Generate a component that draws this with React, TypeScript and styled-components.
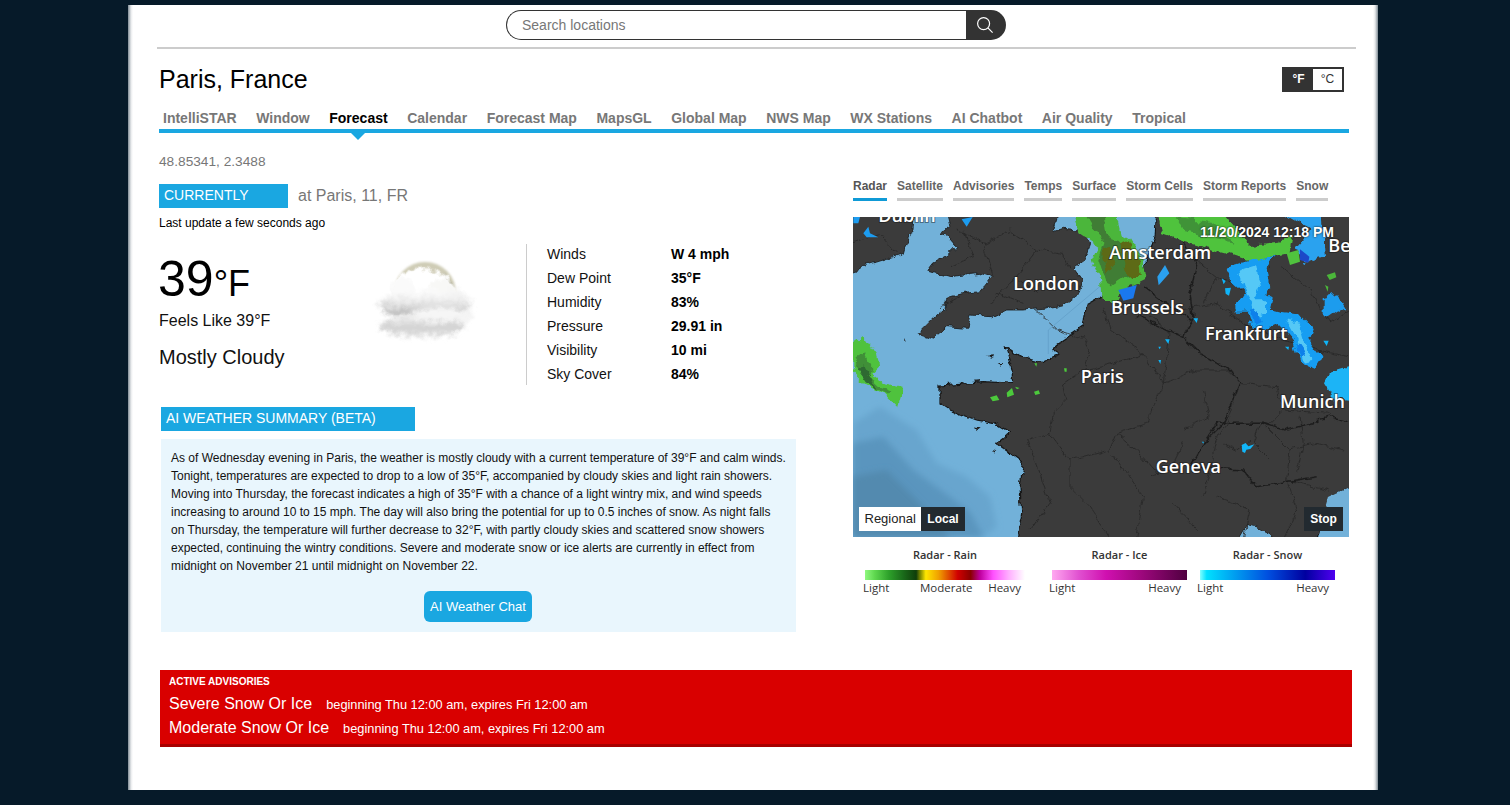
import React from 'react';
import styled, { createGlobalStyle } from 'styled-components';

const GlobalStyle = createGlobalStyle`
  html, body {
    margin: 0;
    padding: 0;
    height: 805px;
    overflow: hidden;
    background: #061a29;
    font-family: "Liberation Sans", Arial, sans-serif;
  }
  * { box-sizing: border-box; }
`;

const NAV_ITEMS = ['IntelliSTAR', 'Window', 'Forecast', 'Calendar', 'Forecast Map', 'MapsGL', 'Global Map', 'NWS Map', 'WX Stations', 'AI Chatbot', 'Air Quality', 'Tropical'];
const MAP_TABS = ['Radar', 'Satellite', 'Advisories', 'Temps', 'Surface', 'Storm Cells', 'Storm Reports', 'Snow'];
const CONDITIONS = [
  ['Winds', 'W 4 mph'],
  ['Dew Point', '35°F'],
  ['Humidity', '83%'],
  ['Pressure', '29.91 in'],
  ['Visibility', '10 mi'],
  ['Sky Cover', '84%'],
];

function SearchIcon() {
  return (
    <svg width="16" height="16" viewBox="0 0 16 16" fill="none" stroke="currentColor" strokeWidth="1.2">
      <circle cx="6.6" cy="6.6" r="6" />
      <path d="M10.9 10.9 L15.6 15.6" />
    </svg>
  );
}

function Cloud() {
  return (
    <svg width="110" height="90" viewBox="0 0 110 90">
      <defs>
        <filter id="soft" x="-20%" y="-30%" width="140%" height="160%"><feGaussianBlur stdDeviation="2" /></filter>
        <filter id="softer" x="-20%" y="-20%" width="140%" height="140%"><feGaussianBlur stdDeviation="0.8" /></filter>
        <filter id="fluff" x="-10%" y="-10%" width="120%" height="120%">
          <feTurbulence type="fractalNoise" baseFrequency="0.14" numOctaves="2" seed="3" />
          <feDisplacementMap in="SourceGraphic" scale="9" xChannelSelector="R" yChannelSelector="G" />
        </filter>
        <linearGradient id="band" x1="0" y1="0" x2="0" y2="1">
          <stop offset="0" stopColor="#ffffff" />
          <stop offset="0.45" stopColor="#e6e6e6" />
          <stop offset="0.8" stopColor="#b8b8b8" />
          <stop offset="1" stopColor="#dcdcdc" />
        </linearGradient>
        <linearGradient id="low" x1="0" y1="0" x2="0" y2="1">
          <stop offset="0" stopColor="#f7f7f7" />
          <stop offset="0.6" stopColor="#cfcfcf" />
          <stop offset="1" stopColor="#f2f2f2" />
        </linearGradient>
      </defs>
      <circle cx="53" cy="36" r="31" fill="#cfccb6" filter="url(#softer)" />
      <path d="M72 16 L82 30 L72 34 Z" fill="#a9a794" filter="url(#softer)" />
      <g filter="url(#fluff)">
        <ellipse cx="50" cy="30" rx="30" ry="18" fill="#ffffff" filter="url(#softer)" />
        <ellipse cx="30" cy="34" rx="12" ry="14" fill="#fafafa" filter="url(#softer)" />
        <ellipse cx="70" cy="34" rx="15" ry="12" fill="#f8f8f6" filter="url(#softer)" />
        <ellipse cx="82" cy="52" rx="19" ry="19" fill="#f4f4f4" filter="url(#soft)" />
        <ellipse cx="52" cy="48" rx="45" ry="15" fill="url(#band)" filter="url(#soft)" />
        <ellipse cx="50" cy="69" rx="42" ry="12" fill="url(#low)" filter="url(#soft)" />
        <ellipse cx="68" cy="57" rx="28" ry="7" fill="#f6f6f6" filter="url(#soft)" />
      </g>
    </svg>
  );
}

function RadarMap() {
  // traced at 3x the map size, hence the viewBox offset and the large numbers
  return (
    <MapSvg viewBox="9 21 1488 960" preserveAspectRatio="none">
      <defs>
        <filter id="b2" x="-20%" y="-20%" width="140%" height="140%"><feGaussianBlur stdDeviation="9" /></filter>
        <filter id="rough" x="-5%" y="-5%" width="110%" height="110%">
          <feTurbulence type="fractalNoise" baseFrequency="0.035" numOctaves="3" seed="4" />
          <feDisplacementMap in="SourceGraphic" scale="22" xChannelSelector="R" yChannelSelector="G" />
        </filter>
        <filter id="lumpy" x="-10%" y="-10%" width="120%" height="120%">
          <feTurbulence type="fractalNoise" baseFrequency="0.03" numOctaves="3" seed="9" />
          <feDisplacementMap in="SourceGraphic" scale="30" xChannelSelector="G" yChannelSelector="R" />
          <feGaussianBlur stdDeviation="1.5" />
        </filter>
      </defs>
      <rect x="0" y="0" width="1510" height="1000" fill="#72b1d9" />

      <path d="M9 640 L90 590 L200 660 L260 760 L350 800 L420 860 L440 950 L400 981 L9 981 Z" fill="#68a5ce" filter="url(#b2)" />
      <path d="M9 700 L100 680 L190 780 L300 860 L360 905 L400 981 L9 981 Z" fill="#5a95be" filter="url(#b2)" />
      <path d="M9 800 L110 780 L220 890 L300 981 L9 981 Z" fill="#528aaf" filter="url(#b2)" />

      <g filter="url(#rough)">
        <g fill="#3a3a3a" stroke="#1b1b1b" strokeWidth="2.5" strokeLinejoin="round">
          <path d="M290 10 L625 10 L610 65 L640 55 L690 60 L722 100 L705 150 L670 175 L695 210 L685 250 L640 285 L580 295 L520 300 L470 300 L425 320 L360 315 L350 355 L290 350 L250 385 L205 370 L255 320 L285 295 L290 265 L340 250 L390 245 L425 200 L390 190 L300 200 L235 180 L250 160 L295 135 L320 110 L290 75 L270 70 L300 50 Z" />
          <path d="M-20 10 L190 10 L185 70 L165 110 L160 130 L100 150 L50 165 L-20 210 Z" />
        </g>
        <path
          d="M920 10 L1520 10 L1520 820 L1440 860 L1420 910 L1400 995 L1270 995 L1250 960 L1190 945 L1160 995 L500 995 L515 910 L510 830 L520 760 L440 700 L480 670 L430 640 L380 630 L300 600 L270 580 L270 525 L400 515 L490 520 L490 490 L465 410 L510 440 L580 455 L630 435 L605 420 L640 390 L700 350 L710 285 L800 235 L860 200 L890 150 L915 80 Z"
          fill="#3a3a3a" stroke="#141414" strokeWidth="3.5" strokeLinejoin="round"
        />
        <path d="M1435 860 L1520 820 L1520 995 L1405 995 L1420 910 Z" fill="#72b1d9" />
        <path d="M1160 995 L1190 945 L1250 960 L1270 995 Z" fill="#72b1d9" />
        <g fill="none" stroke="#282828" strokeWidth="2.5">
          <path d="M700 385 L720 420 L700 480 L640 520 L650 570 L610 610 L600 670 L560 680 L530 690 L560 760 L600 880 L540 960" />
          <path d="M700 480 L790 460 L880 430 L940 520 L920 570 L890 640 L800 670 L780 720 L830 790 L880 860 L860 985" />
          <path d="M600 670 L660 750 L660 830 L720 890 L780 985" />
          <path d="M800 670 L860 720 L920 790 M660 750 L770 720" />
          <path d="M940 520 L1040 480 L1130 480 L1170 520 L1130 640 L1100 690 L1080 790 L1060 860" />
          <path d="M1170 520 L1280 530 L1300 600 L1440 610 M1300 600 L1250 650 L1320 720 L1310 810 L1440 840" />
          <path d="M1000 300 L1100 280 L1180 340 L1300 390 L1400 420 L1497 440" />
          <path d="M320 60 L400 100 L480 60 L560 120 L500 200 L560 250 M400 100 L430 200 M560 120 L640 130 L660 175" />
          <path d="M0 100 L90 70 L140 130 M270 290 L330 260 M500 200 L420 280 M440 250 L520 280 M340 60 L370 140 L300 170" />
          <path d="M1000 120 L1100 200 L1060 280 M1300 170 L1380 240 L1440 340 L1497 300 M1180 100 L1260 170 M1100 200 L1180 240" />
          <path d="M1230 640 L1210 700 L1260 750 M1120 700 L1160 720 L1200 690 M1320 720 L1400 700 L1480 720 M1350 620 L1360 700 L1340 790" />
          <path d="M560 300 L620 360 L700 385 M760 290 L780 360 L880 430 M880 300 L960 370 L940 520 M1060 540 L1080 620 L1000 660" />
          <path d="M1000 700 L960 780 L900 800 M970 880 L1040 960 M1100 860 L1200 900 L1180 985 M1310 810 L1340 900 L1300 985" />
        </g>
        <g fill="none" stroke="#1f1f1f" strokeWidth="4.5">
          <path d="M880 230 L960 290 L1030 330 L1000 380 L1050 430 L1140 480 L1170 520 L1120 640 L1060 700 L1020 770 L1180 780 L1220 830 L1400 800" />
          <path d="M860 320 L930 350 L1000 380 M1030 330 L1020 250 L1040 170 L1000 90" />
          <path d="M1060 700 L1100 640 L1240 640 L1300 660 L1440 620 L1497 640" />
        </g>
        <path d="M410 435 l22 -2 l-4 10 Z M440 462 l20 0 l-6 8 Z M160 385 l6 8 l-6 2 Z M372 650 l14 2 l-8 6 Z M430 720 l12 4 l-8 4 Z" fill="#1b1b1b" />
      </g>
      <path d="M595 360 L755 225 M595 360 L595 432" fill="none" stroke="#5f9cc6" strokeWidth="2" />

      <g filter="url(#lumpy)">
        <path d="M670 10 L800 10 L815 70 L840 85 L880 150 L890 205 L830 235 L805 270 L755 270 L750 210 L725 150 L745 110 L685 70 Z" fill="#4bb63a" />
        <path d="M705 10 L760 10 L770 80 L800 90 L860 150 L865 195 L820 205 L790 225 L770 215 L745 140 L760 100 Z" fill="#3f7d35" />
        <path d="M755 118 L780 110 L795 170 L770 185 Z M810 100 L835 90 L868 160 L872 198 L830 198 Z" fill="#5d6a14" />
        <path d="M920 10 L1120 10 L1200 105 L1290 95 L1325 75 L1315 130 L1260 142 L1200 152 L1140 132 L1000 95 L935 72 Z" fill="#50c33e" />
        <path d="M980 25 L1085 35 L1150 95 L1080 82 L1000 62 Z" fill="#3f9338" />
        <path d="M1145 165 L1200 148 L1245 143 L1280 138 L1250 170 L1258 235 L1238 250 L1268 265 L1258 300 L1290 308 L1355 318 L1390 355 L1378 390 L1415 440 L1395 475 L1350 455 L1330 395 L1290 345 L1250 355 L1205 350 L1190 305 L1150 305 L1185 250 L1145 215 L1130 185 Z" fill="#149df2" />
        <path d="M1165 188 L1218 172 L1230 230 L1210 268 L1245 268 L1245 312 L1212 325 L1212 288 L1178 232 Z M1305 328 L1348 338 L1365 400 L1390 450 L1362 455 L1342 392 Z" fill="#55c8f6" />
        <path d="M1200 300 L1225 295 L1235 340 L1210 345 Z M1340 400 L1355 405 L1365 440 L1350 445 Z" fill="#0d80ea" />
        <path d="M1295 10 L1415 10 L1425 140 L1365 162 L1338 115 L1385 60 Z" fill="#2aa2ef" />
        <path d="M1440 485 L1510 465 L1510 570 L1450 565 L1422 520 Z" fill="#1fb4f6" />
        <path d="M1418 265 L1462 253 L1486 290 L1440 322 L1418 312 Z" fill="#1e9cee" />
        <path d="M10 402 L42 378 L78 430 L84 470 L64 490 L102 518 L155 530 L138 590 L100 552 L48 525 L10 485 Z" fill="#4fc23e" />
        <path d="M14 470 L40 418 L64 468 L58 498 L92 530 L128 545 L116 558 L60 522 Z" fill="#3f8f38" />
        <path d="M18 470 L45 473 L62 505 L82 537 L50 517 Z" fill="#2f6a30" />
      </g>
      <path d="M1310 130 L1345 120 L1350 155 L1320 165 Z" fill="#50c33e" />
      <path d="M1350 118 L1378 140 L1375 158 L1350 150 Z" fill="#1c48c8" />
      <path d="M805 240 L860 225 L850 265 L820 272 Z" fill="#1a78ee" />
      <path d="M922 200 L945 165 L958 190 L926 226 Z" fill="#2aa0ef" />
      <path d="M1115 205 l12 8 l-6 10 Z M1125 235 l18 -2 l-6 24 l-10 -6 Z M1030 325 l14 0 l-4 14 Z M945 388 l14 0 l-4 14 Z M1305 410 l12 0 l-2 10 Z M1420 392 l16 0 l-6 16 Z M925 410 l8 0 l-4 8 Z M925 450 l8 0 l-2 12 Z" fill="#0fb4f8" />
      <path d="M1175 705 l12 -6 l8 10 l18 -6 l-12 14 l-12 2 l-4 10 l-8 -4 Z M1055 695 l6 0 l0 6 Z" fill="#12b6f8" />
      <path d="M10 21 L30 21 L25 40 L10 40 Z M40 70 L55 50 L60 70 L85 82 L50 82 Z M335 28 L368 21 L350 50 Z" fill="#1c9cf0" />
      <path d="M1430 195 l25 -8 l4 15 l-20 8 Z M1425 225 l10 5 l-2 15 Z" fill="#4bb63a" />
      <path d="M420 562 l20 -6 l8 14 l-20 4 Z M470 548 l16 -14 l6 20 l-20 8 Z M552 545 l14 -4 l4 10 l-14 4 Z M553 460 l8 0 l-2 10 Z M642 475 l8 0 l0 10 l-6 0 Z M495 530 l14 4 l-8 4 Z" fill="#4cc93c" />

      <MapLabel x="85" y="36">Dublin</MapLabel>
      <MapLabel x="778" y="147">Amsterdam</MapLabel>
      <MapLabel x="490" y="240">London</MapLabel>
      <MapLabel x="783" y="312">Brussels</MapLabel>
      <MapLabel x="1065" y="390">Frankfurt</MapLabel>
      <MapLabel x="692" y="518">Paris</MapLabel>
      <MapLabel x="1290" y="595">Munich</MapLabel>
      <MapLabel x="917" y="790">Geneva</MapLabel>
      <MapLabel x="1435" y="125">Be</MapLabel>
    </MapSvg>
  );
}

export default function App() {
  return (
    <>
      <GlobalStyle />
      <Panel>
        <SearchBar>
          <SearchField>Search locations</SearchField>
          <SearchButton><SearchIcon /></SearchButton>
        </SearchBar>
        <Rule />
        <TitleRow>
          <Title>Paris, France</Title>
          <UnitToggle>
            <UnitButton $active>°F</UnitButton>
            <UnitButton>°C</UnitButton>
          </UnitToggle>
        </TitleRow>
        <Nav>
          {NAV_ITEMS.map(item => (
            <NavItem key={item} $active={item === 'Forecast'}>{item}</NavItem>
          ))}
        </Nav>
        <Columns>
          <LeftColumn>
            <Coords>48.85341, 2.3488</Coords>
            <CurrentRow>
              <Banner $width={129}>CURRENTLY</Banner>
              <Place>at Paris, 11, FR</Place>
            </CurrentRow>
            <Updated>Last update a few seconds ago</Updated>
            <Conditions>
              <TempBlock>
                <Temp>39<TempUnit>°F</TempUnit></Temp>
                <Feels>Feels Like 39°F</Feels>
                <Sky>Mostly Cloudy</Sky>
              </TempBlock>
              <CloudWrap><Cloud /></CloudWrap>
              <ConditionTable>
                {CONDITIONS.map(([label, value]) => (
                  <ConditionRow key={label}>
                    <ConditionLabel>{label}</ConditionLabel>
                    <ConditionValue>{value}</ConditionValue>
                  </ConditionRow>
                ))}
              </ConditionTable>
            </Conditions>
            <SummarySection>
              <Banner $width={254}>AI WEATHER SUMMARY (BETA)</Banner>
              <SummaryBox>
                <SummaryText>
                  As of Wednesday evening in Paris, the weather is mostly cloudy with a current temperature of 39°F and calm winds.
                  Tonight, temperatures are expected to drop to a low of 35°F, accompanied by cloudy skies and light rain showers.
                  Moving into Thursday, the forecast indicates a high of 35°F with a chance of a light wintry mix, and wind speeds
                  increasing to around 10 to 15 mph. The day will also bring the potential for up to 0.5 inches of snow. As night falls
                  on Thursday, the temperature will further decrease to 32°F, with partly cloudy skies and scattered snow showers
                  expected, continuing the wintry conditions. Severe and moderate snow or ice alerts are currently in effect from
                  midnight on November 21 until midnight on November 22.
                </SummaryText>
                <ChatButton>AI Weather Chat</ChatButton>
              </SummaryBox>
            </SummarySection>
          </LeftColumn>
          <RightColumn>
            <MapTabs>
              {MAP_TABS.map(tab => (
                <MapTab key={tab} $active={tab === 'Radar'}>{tab}</MapTab>
              ))}
            </MapTabs>
            <MapFrame>
              <RadarMap />
              <Timestamp>11/20/2024 12:18 PM</Timestamp>
              <ZoomSwitch>
                <RegionalButton>Regional</RegionalButton>
                <MapButton>Local</MapButton>
              </ZoomSwitch>
              <StopButton>Stop</StopButton>
            </MapFrame>
            <Legend>
              <LegendColumn $width={160}>
                <LegendTitle>Radar - Rain</LegendTitle>
                <LegendBar $kind="rain" />
                <LegendLabels $left={-2} $right={4}>
                  <span>Light</span>
                  <LegendMiddle>Moderate</LegendMiddle>
                  <span>Heavy</span>
                </LegendLabels>
              </LegendColumn>
              <LegendColumn $width={135}>
                <LegendTitle>Radar - Ice</LegendTitle>
                <LegendBar $kind="ice" />
                <LegendLabels $left={-3} $right={6}>
                  <span>Light</span>
                  <span>Heavy</span>
                </LegendLabels>
              </LegendColumn>
              <LegendColumn $width={135}>
                <LegendTitle>Radar - Snow</LegendTitle>
                <LegendBar $kind="snow" />
                <LegendLabels $left={-3} $right={6}>
                  <span>Light</span>
                  <span>Heavy</span>
                </LegendLabels>
              </LegendColumn>
            </Legend>
          </RightColumn>
        </Columns>
        <Advisories>
          <AdvisoryHeading>ACTIVE ADVISORIES</AdvisoryHeading>
          <AdvisoryRow>
            <AdvisoryName>Severe Snow Or Ice</AdvisoryName>
            <AdvisoryTime>beginning Thu 12:00 am, expires Fri 12:00 am</AdvisoryTime>
          </AdvisoryRow>
          <AdvisoryRow>
            <AdvisoryName>Moderate Snow Or Ice</AdvisoryName>
            <AdvisoryTime>beginning Thu 12:00 am, expires Fri 12:00 am</AdvisoryTime>
          </AdvisoryRow>
        </Advisories>
      </Panel>
    </>
  );
}

const Panel = styled.div`
  width: 1250px;
  height: 785px;
  margin: 5px 0 0 128px;
  padding: 5px 29px 0 31px;
  background: linear-gradient(
    to right,
    #7f8c95 0,
    #e8eaec 3px,
    #fff 5px,
    #fff calc(100% - 5px),
    #e8eaec calc(100% - 3px),
    #7f8c95 100%
  );
`;

const SearchBar = styled.div`
  display: flex;
  width: 500px;
  height: 30px;
  margin-left: 347px;
`;

const SearchField = styled.div`
  flex: 1;
  padding-left: 15px;
  border: 1px solid #333;
  border-right: 0;
  border-radius: 15px 0 0 15px;
  color: #777;
  font-size: 14px;
  line-height: 28px;
`;

const SearchButton = styled.div`
  display: flex;
  width: 40px;
  padding-right: 3px;
  align-items: center;
  justify-content: center;
  border-radius: 0 15px 15px 0;
  background: #333;
  color: #fff;
`;

const Rule = styled.div`
  width: 1199px;
  height: 2px;
  margin: 7px 0 0 -2px;
  background: #ccc;
`;

const TitleRow = styled.div`
  display: flex;
  height: 40px;
  margin-top: 18px;
  padding-right: 5px;
  align-items: flex-start;
  justify-content: space-between;
`;

const Title = styled.h1`
  margin: -3px 0 0;
  color: #000;
  font-size: 25px;
  font-weight: 400;
  line-height: 30px;
`;

const UnitToggle = styled.div`
  display: flex;
  height: 25px;
  border: 2px solid #333;
`;

const UnitButton = styled.div<{ $active?: boolean }>`
  width: 29px;
  background: ${props => (props.$active ? '#333' : '#fff')};
  color: ${props => (props.$active ? '#fff' : '#333')};
  font-size: 12px;
  font-weight: ${props => (props.$active ? 700 : 400)};
  line-height: 21px;
  text-align: center;
`;

const Nav = styled.nav`
  display: flex;
  height: 25px;
  gap: 19.55px;
  margin-top: 1px;
  padding-left: 4px;
  border-bottom: 4px solid #1aa7e1;
`;

const NavItem = styled.div<{ $active?: boolean }>`
  position: relative;
  color: ${props => (props.$active ? '#000' : '#777')};
  font-size: 14px;
  font-weight: 700;
  line-height: 21px;
  ${props =>
    props.$active &&
    `&::after {
      content: '';
      position: absolute;
      left: 50%;
      top: 25px;
      margin-left: -7px;
      border-left: 7px solid transparent;
      border-right: 7px solid transparent;
      border-top: 7px solid #1aa7e1;
    }`}
`;

const Columns = styled.div`
  display: flex;
  height: 537px;
  padding-top: 21px;
`;

const LeftColumn = styled.div`
  width: 694px;
`;

const Coords = styled.div`
  color: #777;
  font-size: 13.7px;
  line-height: 16px;
`;

const CurrentRow = styled.div`
  display: flex;
  align-items: center;
  gap: 10px;
  margin-top: 14px;
`;

const Banner = styled.div<{ $width: number }>`
  width: ${props => props.$width}px;
  height: 24px;
  padding-left: 5px;
  background: #1aa7e1;
  color: #fff;
  font-size: 14px;
  line-height: 23px;
  white-space: nowrap;
`;

const Place = styled.div`
  color: #777;
  font-size: 16px;
`;

const Updated = styled.div`
  margin-top: 7px;
  color: #000;
  font-size: 12px;
  line-height: 16px;
`;

const Conditions = styled.div`
  display: flex;
  height: 141px;
  margin-top: 13px;
`;

const TempBlock = styled.div`
  width: 213px;
  padding-top: 7px;
`;

const Temp = styled.div`
  margin-left: -1px;
  color: #000;
  font-size: 50px;
  line-height: 56px;
`;

const TempUnit = styled.span`
  font-size: 36px;
`;

const Feels = styled.div`
  margin-top: -1px;
  color: #111;
  font-size: 16px;
  line-height: 20px;
`;

const Sky = styled.div`
  margin-top: 14px;
  color: #111;
  font-size: 20px;
  line-height: 24px;
`;

const CloudWrap = styled.div`
  width: 154px;
  padding-top: 13px;
`;

const ConditionTable = styled.div`
  padding: 0 0 0 20px;
  border-left: 1px solid #ccc;
`;

const ConditionRow = styled.div`
  display: flex;
  height: 24px;
  font-size: 14px;
  line-height: 20px;
`;

const ConditionLabel = styled.div`
  width: 124px;
  color: #111;
`;

const ConditionValue = styled.div`
  color: #000;
  font-weight: 700;
`;

const SummarySection = styled.div`
  margin: 22px 0 0 2px;
`;

const SummaryBox = styled.div`
  width: 635px;
  height: 193px;
  margin-top: 8px;
  padding: 10px 9.5px 0 10px;
  background: #e9f6fd;
`;

const SummaryText = styled.p`
  margin: 0;
  color: #111;
  font-size: 12px;
  line-height: 18px;
`;

const ChatButton = styled.div`
  width: 108px;
  height: 31px;
  margin: 16px 0 0 253px;
  border-radius: 6px;
  background: #1aa7e1;
  color: #fff;
  font-size: 13px;
  line-height: 31px;
  text-align: center;
`;

const RightColumn = styled.div`
  width: 496px;
  padding-top: 24px;
`;

const MapTabs = styled.div`
  display: flex;
  gap: 10px;
`;

const MapTab = styled.div<{ $active?: boolean }>`
  height: 23px;
  border-bottom: 3px solid ${props => (props.$active ? '#0f9ad6' : '#ccc')};
  color: ${props => (props.$active ? '#555' : '#666')};
  font-size: 12px;
  font-weight: 700;
  line-height: 16px;
  white-space: nowrap;
`;

const MapFrame = styled.div`
  position: relative;
  height: 320px;
  margin-top: 16px;
`;

const MapSvg = styled.svg`
  display: block;
  width: 496px;
  height: 320px;
`;

const MapLabel = styled.text`
  fill: #fff;
  stroke: rgba(20, 20, 20, 0.45);
  stroke-width: 6px;
  paint-order: stroke;
  font-family: "Open Sans", sans-serif;
  font-size: 54px;
  font-weight: 600;
`;

const Timestamp = styled.div`
  position: absolute;
  top: 7px;
  right: 15px;
  color: #fff;
  font-size: 14px;
  font-weight: 700;
  line-height: 16px;
  text-shadow: 0 0 2px #000;
`;

const ZoomSwitch = styled.div`
  position: absolute;
  left: 6px;
  bottom: 6px;
  display: flex;
`;

const MapButton = styled.div`
  height: 24px;
  padding: 0 6px;
  background: #222a30;
  color: #fff;
  font-size: 12px;
  font-weight: 700;
  line-height: 24px;
`;

const RegionalButton = styled(MapButton)`
  padding: 0 5.5px;
  background: #fff;
  color: #222;
  font-size: 13px;
  font-weight: 400;
`;

const StopButton = styled(MapButton)`
  position: absolute;
  right: 6px;
  bottom: 6px;
  width: 39px;
  padding: 0;
  text-align: center;
`;

const Legend = styled.div`
  display: flex;
  gap: 13px;
  margin-top: 10px;
  padding-left: 12px;
  font-family: "Open Sans", sans-serif;
  font-size: 11.5px;
  color: #333;
`;

const LegendColumn = styled.div<{ $width: number }>`
  width: ${props => props.$width}px;
  &:first-child { margin-right: 14px; }
`;

const LegendTitle = styled.div`
  height: 16px;
  font-weight: 600;
  font-size: 11px;
  line-height: 16px;
  text-align: center;
  white-space: nowrap;
`;

const BAR_COLOURS = {
  rain: '#90f880 0, #5fd84f 6%, #2da02a 15%, #1a6a1a 24%, #0f3d0a 32%, #6a7a00 34%, #ffe600 38%, #f0a000 46%, #e05000 52%, #d00000 58%, #8a0000 66%, #c000a0 72%, #ff50ff 80%, #ffb0ff 90%, #fff 100%',
  ice: '#ffa8f0 0, #e050d0 20%, #d010b0 40%, #a0087f 65%, #500040 100%',
  snow: '#80ffff 0, #00e0ff 5%, #00a0f0 25%, #0050e0 50%, #0000a0 78%, #5000f0 100%',
};

const LegendBar = styled.div<{ $kind: keyof typeof BAR_COLOURS }>`
  height: 10px;
  margin-top: 7px;
  background: linear-gradient(to right, ${props => BAR_COLOURS[props.$kind]});
`;

const LegendLabels = styled.div<{ $left: number; $right: number }>`
  display: flex;
  justify-content: space-between;
  margin: 0 ${props => props.$right}px 0 ${props => props.$left}px;
  line-height: 16px;
`;

const LegendMiddle = styled.span`
  margin-left: 15px;
`;

const Advisories = styled.div`
  width: 1192px;
  height: 77px;
  margin-left: 1px;
  padding: 6px 9px 0;
  border-bottom: 3px solid #a80000;
  background: #d90000;
  color: #fff;
`;

const AdvisoryHeading = styled.div`
  margin-bottom: 4px;
  font-size: 10px;
  font-weight: 700;
  line-height: 12px;
`;

const AdvisoryRow = styled.div`
  display: flex;
  align-items: baseline;
  gap: 14px;
  height: 24px;
  line-height: 24px;
`;

const AdvisoryName = styled.span`
  font-size: 16px;
`;

const AdvisoryTime = styled.span`
  font-size: 12.8px;
`;
